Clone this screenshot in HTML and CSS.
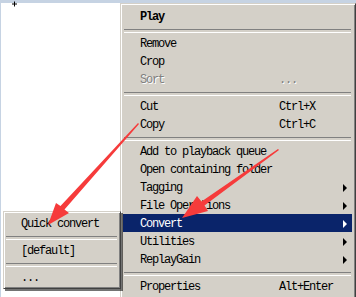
FILE: index.html
```html
<!DOCTYPE html>
<html lang="en">
<head>
  <meta charset="UTF-8">
  <title>Context menu</title>
  <link rel="stylesheet" href="styles.css">
</head>
<body>

  <div class="menu main-menu">
    <div class="item bold"><span class="label">Play</span></div>
    <div class="sep"></div>
    <div class="item"><span class="label">Remove</span></div>
    <div class="item"><span class="label">Crop</span></div>
    <div class="item disabled"><span class="label">Sort</span><span class="key">...</span></div>
    <div class="sep"></div>
    <div class="item"><span class="label">Cut</span><span class="key">Ctrl+X</span></div>
    <div class="item"><span class="label">Copy</span><span class="key">Ctrl+C</span></div>
    <div class="sep"></div>
    <div class="item"><span class="label">Add to playback queue</span></div>
    <div class="item"><span class="label">Open containing folder</span></div>
    <div class="item"><span class="label">Tagging</span><i class="arrow"></i></div>
    <div class="item"><span class="label">File Operations</span><i class="arrow"></i></div>
    <div class="item active"><span class="label">Convert</span><i class="arrow"></i></div>
    <div class="item"><span class="label">Utilities</span><i class="arrow"></i></div>
    <div class="item"><span class="label">ReplayGain</span><i class="arrow"></i></div>
    <div class="sep"></div>
    <div class="item"><span class="label">Properties</span><span class="key">Alt+Enter</span></div>
  </div>

  <div class="menu sub-menu">
    <div class="item"><span class="label">Quick convert</span></div>
    <div class="sep"></div>
    <div class="item"><span class="label">[default]</span></div>
    <div class="sep"></div>
    <div class="item"><span class="label">...</span></div>
  </div>

  <svg class="marks" width="356" height="297" viewBox="0 0 356 297">
    <!-- cursor -->
    <path d="M12 4h5M14.5 1.5v5" stroke="#000" stroke-width="1" fill="none"/>
    <!-- arrow to Quick convert -->
    <polygon fill="#f63b3b" points="138,123 139,124 64.5,209.5 69,213 48,225 56,203 60.5,206"/>
    <!-- arrow to Convert -->
    <polygon fill="#f63b3b" points="278,149 279,150 204.5,205.5 208,211 182,218 197,196 201.5,201.5"/>
  </svg>

</body>
</html>
```

FILE: styles.css
```css
* { box-sizing: border-box; }

html, body {
  margin: 0;
  padding: 0;
  width: 356px;
  height: 297px;
  overflow: hidden;
}

body {
  background-color: #fff;
  border-top: 3px solid #c6d3e3;
  border-left: 1px solid #c6d3e3;
  font-family: "Liberation Mono", "DejaVu Sans Mono", monospace;
  font-size: 12px;
  letter-spacing: -1.2px;
  color: #000;
}

.menu {
  position: absolute;
  background-color: #d4d0c8;
  border: 1px solid;
  border-color: #d4d0c8 #404040 #404040 #d4d0c8;
  box-shadow: inset 1px 1px #fff, inset -1px -1px #808080;
}

.main-menu {
  left: 120px;
  top: 3px;
  width: 236px;
  padding: 3px 3px 3px 2px;
}

.sub-menu {
  left: 3px;
  top: 211px;
  width: 118px;
  padding: 2px 2px 2px 1px;
  box-shadow: inset 1px 1px #fff, inset -1px -1px #808080, 2px 2px 0 rgba(0, 0, 0, 0.55);
}

.item {
  display: flex;
  align-items: center;
  height: 18px;
  line-height: 16px;
  padding: 2px 0 0 17px;
  white-space: nowrap;
}

.sub-menu .item {
  padding-left: 16px;
}

.label {
  width: 139px;
}

.bold {
  font-weight: bold;
}

.disabled {
  color: #808080;
  text-shadow: 1px 1px #fff;
}

.active {
  background-color: #0a246a;
  color: #fff;
}

.arrow {
  width: 0;
  height: 0;
  margin-left: auto;
  margin-right: 5px;
  border-left: 4px solid #000;
  border-top: 4px solid transparent;
  border-bottom: 4px solid transparent;
}

.active .arrow {
  border-left-color: #fff;
}

.sep {
  height: 9px;
  margin: 0 1px;
  padding-top: 4px;
}

.sep::before {
  content: "";
  display: block;
  height: 2px;
  border-top: 1px solid #808080;
  border-bottom: 1px solid #fff;
}

.marks {
  position: absolute;
  left: 0;
  top: 0;
  pointer-events: none;
}
```
